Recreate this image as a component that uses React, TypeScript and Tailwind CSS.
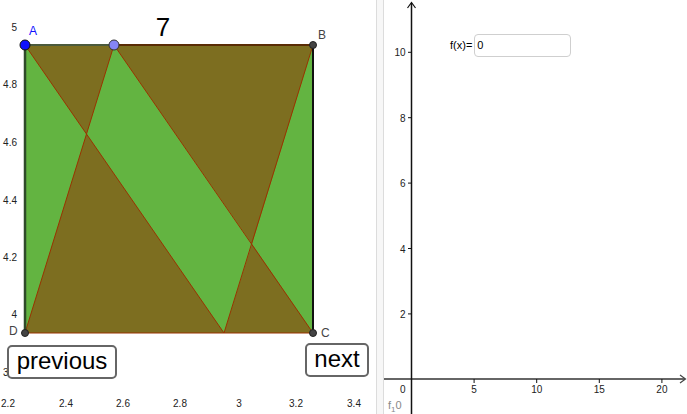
import React from "react";

// Geometrie der linken Grafik (Pixelkoordinaten)
const A = { x: 25, y: 45 };
const B = { x: 313, y: 45 };
const C = { x: 313, y: 333 };
const D = { x: 25, y: 333 };
const E = { x: 114, y: 45 };
const F = { x: 224, y: 333 };
const P1 = { x: 86.5, y: 134 };
const P2 = { x: 252, y: 244 };

const pts = (...p: { x: number; y: number }[]) => p.map((q) => `${q.x},${q.y}`).join(" ");

const DARK = "#7d6e20";
const GREEN = "#63b441";
const EDGE = "#993300";
const FONT = "'Liberation Sans', Arial, sans-serif";

const leftYLabels = [
  { t: "5", y: 31 },
  { t: "4.8", y: 88 },
  { t: "4.6", y: 146 },
  { t: "4.4", y: 204 },
  { t: "4.2", y: 261 },
  { t: "4", y: 318 },
  { t: "3.8", y: 376 },
];
const leftXLabels = [
  { t: "2.2", x: 8 },
  { t: "2.4", x: 66 },
  { t: "2.6", x: 123 },
  { t: "2.8", x: 180 },
  { t: "3", x: 239 },
  { t: "3.2", x: 296 },
  { t: "3.4", x: 354 },
];

function LeftGraphic() {
  return (
    <svg width="376" height="414" viewBox="0 0 376 414" className="absolute inset-0">
      {/* Achsenbeschriftung */}
      <g fontFamily={FONT} fontSize="10" fill="#222">
        {leftYLabels.map((l) => (
          <text key={l.t} x="17" y={l.y} textAnchor="end">
            {l.t}
          </text>
        ))}
        {leftXLabels.map((l) => (
          <text key={l.t} x={l.x} y="407" textAnchor="middle">
            {l.t}
          </text>
        ))}
      </g>

      {/* Quadrat mit Streifen */}
      <polygon points={pts(A, B, C, D)} fill={GREEN} />
      <polygon points={pts(A, E, P1)} fill={DARK} />
      <polygon points={pts(D, P1, F)} fill={DARK} />
      <polygon points={pts(E, B, P2)} fill={DARK} />
      <polygon points={pts(F, C, P2)} fill={DARK} />

      <g stroke={EDGE} strokeWidth="1" fill="none">
        <line x1={A.x} y1={A.y} x2={F.x} y2={F.y} />
        <line x1={E.x} y1={E.y} x2={C.x} y2={C.y} />
        <line x1={D.x} y1={D.y} x2={E.x} y2={E.y} />
        <line x1={F.x} y1={F.y} x2={B.x} y2={B.y} />
        <line x1={D.x} y1={D.y} x2={C.x} y2={C.y} />
      </g>

      {/* Ränder */}
      <line x1={A.x} y1={A.y} x2={E.x} y2={E.y} stroke="#4b5a3c" strokeWidth="2" />
      <line x1={E.x} y1={E.y} x2={B.x} y2={B.y} stroke="#5a2c05" strokeWidth="2" />
      <line x1={A.x} y1={A.y} x2={D.x} y2={D.y} stroke="#2f4a2a" strokeWidth="2.5" />
      <line x1={B.x} y1={B.y} x2={C.x} y2={C.y} stroke="#111" strokeWidth="2" />

      {/* Punkte */}
      <circle cx={B.x} cy={B.y} r="3.5" fill="#444" stroke="#222" strokeWidth="1" />
      <circle cx={C.x} cy={C.y} r="3.5" fill="#444" stroke="#222" strokeWidth="1" />
      <circle cx={D.x} cy={D.y} r="3.5" fill="#444" stroke="#222" strokeWidth="1" />
      <circle cx={A.x} cy={A.y} r="5" fill="#1010ff" stroke="#111" strokeWidth="1" />
      <circle cx={E.x} cy={E.y} r="5" fill="#8585f5" stroke="#333" strokeWidth="1" />

      <g fontFamily={FONT} fontSize="12">
        <text x="29" y="35" fill="#1010ff">A</text>
        <text x="318" y="39" fill="#444">B</text>
        <text x="321" y="337" fill="#444">C</text>
        <text x="9" y="335" fill="#444">D</text>
      </g>
      <text x="163" y="36" fontFamily={FONT} fontSize="26" textAnchor="middle" fill="#000">
        7
      </text>
    </svg>
  );
}

const yTicks = [2, 4, 6, 8, 10];
const xTicks = [5, 10, 15, 20];
const yPix = (v: number) => 379.3 - 32.7 * v;
const xPix = (v: number) => 411.5 + 12.52 * v;

function RightGraphic() {
  return (
    <svg width="303" height="414" viewBox="384 0 303 414" className="absolute inset-0">
      {/* x-Achse */}
      <line x1="384" y1="379" x2="685" y2="379" stroke="#666" strokeWidth="2" />
      <path d="M680 375 L685.5 379 L680 383" stroke="#444" strokeWidth="1.2" fill="none" />
      {/* y-Achse */}
      <line x1="411.5" y1="3" x2="411.5" y2="414" stroke="#111" strokeWidth="1.5" />
      <path d="M407.5 8 L411.5 2.5 L415.5 8" stroke="#111" strokeWidth="1.2" fill="none" />

      <g stroke="#111" strokeWidth="1">
        {yTicks.map((v) => (
          <line key={v} x1="408" y1={yPix(v)} x2="411.5" y2={yPix(v)} />
        ))}
        {xTicks.map((v) => (
          <line key={v} x1={xPix(v)} y1="379" x2={xPix(v)} y2="383" />
        ))}
      </g>

      <g fontFamily={FONT} fontSize="10" fill="#222">
        {yTicks.map((v) => (
          <text key={v} x="405.5" y={yPix(v) + 4} textAnchor="end">
            {v}
          </text>
        ))}
        {xTicks.map((v) => (
          <text key={v} x={xPix(v)} y="393" textAnchor="middle">
            {v}
          </text>
        ))}
        <text x="405.5" y="393" textAnchor="end">0</text>
      </g>

      <text x="388" y="409" fontFamily={FONT} fontSize="11" fill="#888">
        f<tspan fontSize="8" dy="3">1</tspan>
        <tspan dy="-3">0</tspan>
      </text>
    </svg>
  );
}

export default function App() {
  return (
    <div
      className="flex w-[687px] h-[414px] overflow-hidden bg-white"
      style={{ fontFamily: FONT }}
    >
      {/* Grafik 1 */}
      <div className="relative w-[376px] h-full shrink-0">
        <LeftGraphic />
        <button className="absolute left-[7px] top-[345px] w-[110px] h-[34px] rounded-[5px] border-2 border-[#666] bg-white text-[24px] leading-none text-black pb-[3px]">
          previous
        </button>
        <button className="absolute left-[305px] top-[343px] w-[64px] h-[34px] rounded-[5px] border-2 border-[#666] bg-white text-[24px] leading-none text-black pb-[3px]">
          next
        </button>
      </div>

      {/* Trenner */}
      <div className="w-[8px] h-full shrink-0 bg-[#f7f7f7] border-x border-[#dcdcdc]" />

      {/* Grafik 2 */}
      <div className="relative flex-1 h-full">
        <RightGraphic />
        <div className="absolute left-[66px] top-[34px] flex items-center gap-[2px] text-[11px] text-black">
          <span>f(x)=</span>
          <div className="w-[97px] h-[23px] rounded-[4px] border border-[#cfcfcf] bg-white flex items-center px-[2px]">
            0
          </div>
        </div>
      </div>
    </div>
  );
}
